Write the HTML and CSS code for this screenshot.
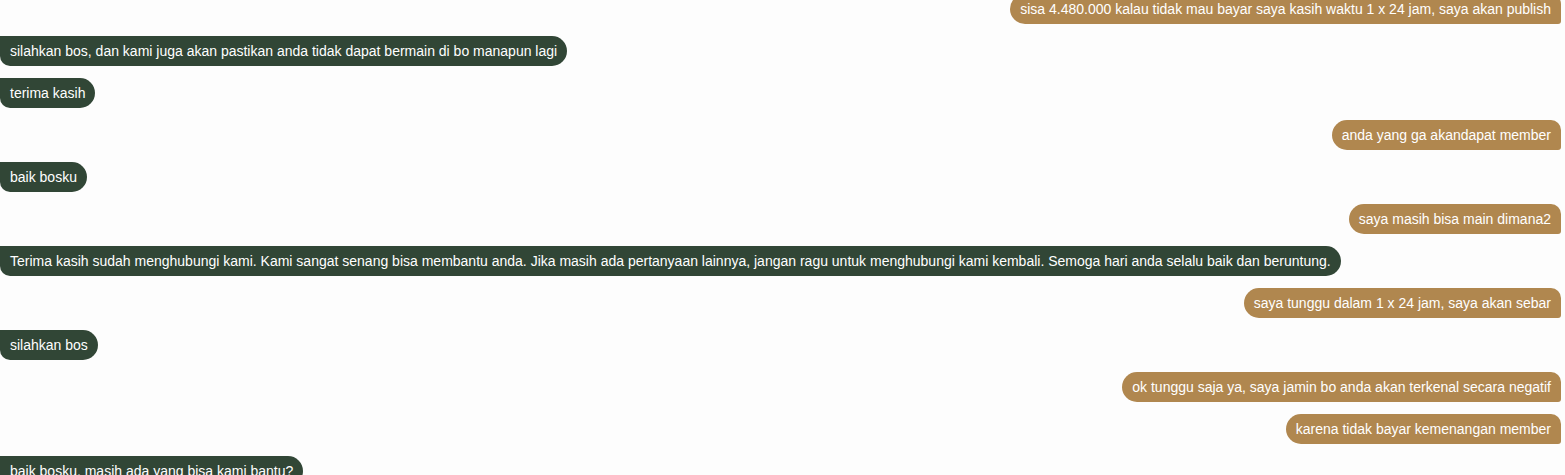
FILE: index.html
```html
<!DOCTYPE html>
<html lang="id">

<head>
    <meta charset="UTF-8">
    <title>Chat</title>
    <meta name="viewport" content="width=device-width, initial-scale=1.0">
    <link rel="stylesheet" href="styles.css">
</head>

<body>
    <main id="chat">
        <div class="msg msg-out"><p class="bubble">sisa 4.480.000 kalau tidak mau bayar saya kasih waktu 1 x 24 jam, saya akan publish</p></div>
        <div class="msg msg-in"><p class="bubble">silahkan bos, dan kami juga akan pastikan anda tidak dapat bermain di bo manapun lagi</p></div>
        <div class="msg msg-in"><p class="bubble">terima kasih</p></div>
        <div class="msg msg-out"><p class="bubble">anda yang ga akandapat member</p></div>
        <div class="msg msg-in"><p class="bubble">baik bosku</p></div>
        <div class="msg msg-out"><p class="bubble">saya masih bisa main dimana2</p></div>
        <div class="msg msg-in"><p class="bubble">Terima kasih sudah menghubungi kami. Kami sangat senang bisa membantu anda. Jika masih ada pertanyaan lainnya, jangan ragu untuk menghubungi kami kembali. Semoga hari anda selalu baik dan beruntung.</p></div>
        <div class="msg msg-out"><p class="bubble">saya tunggu dalam 1 x 24 jam, saya akan sebar</p></div>
        <div class="msg msg-in"><p class="bubble">silahkan bos</p></div>
        <div class="msg msg-out"><p class="bubble">ok tunggu saja ya, saya jamin bo anda akan terkenal secara negatif</p></div>
        <div class="msg msg-out"><p class="bubble">karena tidak bayar kemenangan member</p></div>
        <div class="msg msg-in"><p class="bubble">baik bosku, masih ada yang bisa kami bantu?</p></div>
    </main>
</body>

</html>
```

FILE: styles.css
```css
html,
body {
    height: 100%;
}

body {
    margin: 0;
    background: #fdfdfd;
    font-family: 'Liberation Sans', Arial, sans-serif;
    font-size: 14px;
    overflow: hidden;
}

#chat {
    display: flex;
    flex-direction: column;
    gap: 12px;
    /* list is scrolled a little past the first message */
    margin-top: -6px;
    padding-right: 4px;
}

.msg {
    display: flex;
}

.msg-out {
    justify-content: flex-end;
}

.bubble {
    margin: 0;
    padding: 6px 10px;
    line-height: 18px;
    color: #fff;
    white-space: nowrap;
}

.msg-in .bubble {
    background-color: #314636;
    border-radius: 0 15px 15px 10px;
}

.msg-out .bubble {
    background-color: #b0874f;
    border-radius: 15px 10px 3px 15px;
}
```
